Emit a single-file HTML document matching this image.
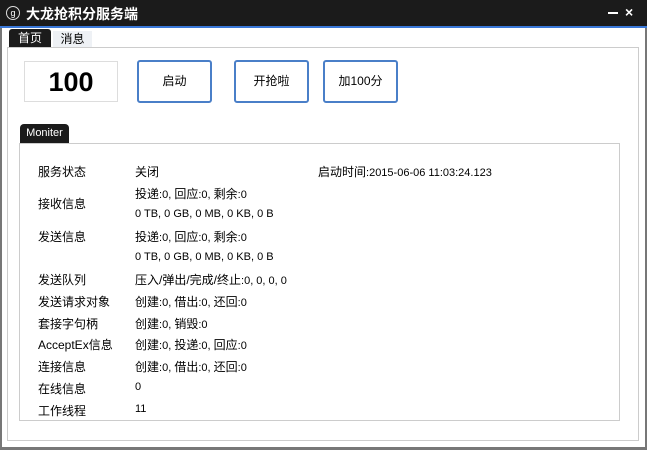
<!DOCTYPE html><html><head><meta charset="utf-8"><style>
body{margin:0;width:647px;height:450px;position:relative;overflow:hidden;background:#fff;font-family:"Liberation Sans","Noto Sans CJK SC",sans-serif;font-size:12px;color:#000}
.a{position:absolute;white-space:nowrap}
.btn{position:absolute;border:2px solid #4a7fc8;border-radius:3px;background:#fff;text-align:center;box-sizing:border-box;font-size:12px}
.s{font-size:11px}
</style></head><body>
<div class="a" style="left:0;top:0;width:647px;height:26px;background:#1b1b1b"></div>
<div class="a" style="left:0;top:26px;width:647px;height:2px;background:#3a78d8"></div>
<div class="a" style="left:0;top:28px;width:2px;height:422px;background:#777"></div>
<div class="a" style="left:645px;top:28px;width:2px;height:422px;background:#777"></div>
<div class="a" style="left:0;top:447px;width:647px;height:3px;background:#777"></div>
<div class="a" style="left:6px;top:6px;width:12px;height:12px;border-radius:50%;border:1px solid #ddd;color:#fff;font-size:9px;line-height:12px;text-align:center">g</div>
<div class="a" style="left:26px;top:4px;color:#fff;font-weight:bold;font-size:14px">大龙抢积分服务端</div>
<div class="a" style="left:608px;top:12px;width:10px;height:2px;background:#fff"></div>
<div class="a" style="left:625px;top:4px;color:#fff;font-weight:bold;font-size:14px">×</div>
<div class="a" style="left:9px;top:29px;width:42px;height:18px;background:#1b1b1b;border-radius:3px 3px 0 0;color:#fff;text-align:center;line-height:19px">首页</div>
<div class="a" style="left:53px;top:31px;width:39px;height:16px;background:#eef1f5;text-align:center;line-height:17px">消息</div>
<div class="a" style="left:7px;top:47px;width:632px;height:394px;border:1px solid #ccc;box-sizing:border-box"></div>
<div class="a" style="left:24px;top:61px;width:94px;height:41px;border:1px solid #ddd;box-sizing:border-box;text-align:center;font-size:27px;font-weight:bold;line-height:41px">100</div>
<div class="btn" style="left:137px;top:60px;width:75px;height:43px;line-height:39px">启动</div>
<div class="btn" style="left:234px;top:60px;width:75px;height:43px;line-height:39px">开抢啦</div>
<div class="btn" style="left:323px;top:60px;width:75px;height:43px;line-height:39px">加100分</div>
<div class="a" style="left:20px;top:124px;width:49px;height:19px;background:#1b1b1b;border-radius:4px 4px 0 0;color:#fff;font-size:11px;line-height:19px;text-align:center">Moniter</div>
<div class="a" style="left:19px;top:143px;width:601px;height:278px;border:1px solid #ccc;box-sizing:border-box"></div>
<div class="a" style="left:38px;top:163px">服务状态</div><div class="a" style="left:135px;top:163px">关闭</div>
<div class="a" style="left:318px;top:163px" ><span>启动时间</span><span class="s">:2015-06-06 11:03:24.123</span></div>
<div class="a" style="left:38px;top:195px">接收信息</div>
<div class="a" style="left:135px;top:185px">投递<span class="s">:0, </span>回应<span class="s">:0, </span>剩余<span class="s">:0</span></div>
<div class="a s" style="left:135px;top:208px">0 TB, 0 GB, 0 MB, 0 KB, 0 B</div>
<div class="a" style="left:38px;top:228px">发送信息</div>
<div class="a" style="left:135px;top:228px">投递<span class="s">:0, </span>回应<span class="s">:0, </span>剩余<span class="s">:0</span></div>
<div class="a s" style="left:135px;top:251px">0 TB, 0 GB, 0 MB, 0 KB, 0 B</div>
<div class="a" style="left:38px;top:271px">发送队列</div><div class="a" style="left:135px;top:271px">压入/弹出/完成/终止<span class="s">:0, 0, 0, 0</span></div>
<div class="a" style="left:38px;top:293px">发送请求对象</div><div class="a" style="left:135px;top:293px">创建<span class="s">:0, </span>借出<span class="s">:0, </span>还回<span class="s">:0</span></div>
<div class="a" style="left:38px;top:315px">套接字句柄</div><div class="a" style="left:135px;top:315px">创建<span class="s">:0, </span>销毁<span class="s">:0</span></div>
<div class="a" style="left:38px;top:336px">AcceptEx信息</div><div class="a" style="left:135px;top:336px">创建<span class="s">:0, </span>投递<span class="s">:0, </span>回应<span class="s">:0</span></div>
<div class="a" style="left:38px;top:358px">连接信息</div><div class="a" style="left:135px;top:358px">创建<span class="s">:0, </span>借出<span class="s">:0, </span>还回<span class="s">:0</span></div>
<div class="a" style="left:38px;top:380px">在线信息</div><div class="a s" style="left:135px;top:381px">0</div>
<div class="a" style="left:38px;top:402px">工作线程</div><div class="a s" style="left:135px;top:403px">11</div>
</body></html>
